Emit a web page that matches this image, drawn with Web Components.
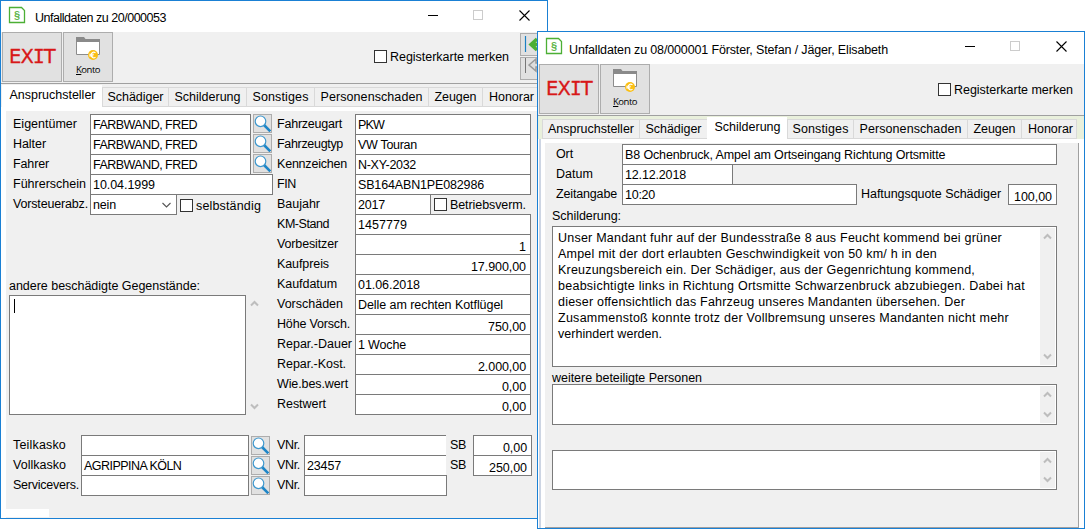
<!DOCTYPE html>
<html lang="de">
<head>
<meta charset="utf-8">
<title>Unfalldaten</title>
<style>
  body {
    margin: 0;
    width: 1085px;
    height: 529px;
    position: relative;
    overflow: hidden;
    background: #fff;
    color: #000;
    font: 12.5px/20px "Liberation Sans", Arial, sans-serif;
  }
  /* free floating windows on the desktop */
  #win-a { position: absolute; left: 0; top: 0; width: 548px; height: 519px; }
  #win-b {
    position: absolute; left: 537px; top: 31px; width: 548px; height: 498px;
    --title-h: 32px; --title-pad: 8px 0 0 6px; --check-top: 16px;
    --strip: #e9f0dc; --edge: #cdd5e3; --strip-pad: 4px;
    --panel-left: 4px; --panel-right: 5px; --panel-line: #a0a0a0;
  }
  .cols { display: flex; padding-top: 3px; }
  .left { width: 264px; padding-left: 7px; --label: 77px; }
  .right { --label: 78px; }
  .below { padding: 20px 0 0 7px; --label: 68px; }
  .other { margin: 62px 0 0 -4px; }
  .memo { display: flex; margin: -1px 0 0 -4px; }
  .patch { width: 43px; height: 8px; margin-top: 14px; background: #fff; }
  .b-rows { padding: 1px 0 0 11px; --label: 66px; }
  .b-text { padding-left: 7px; }
</style>
</head>
<body>

<app-window id="win-a" caption="Unfalldaten zu 20/000053" cw="131">
  <tool-bar slot="toolbar" check-gap="11" nav></tool-bar>
  <tab-strip slot="tabs" active="0" first="1" widths="100,66,78,68,114,54,60"></tab-strip>
  <div class="cols">
    <div class="left">
      <form-row label="Eigentümer" lw="64"><ui-input w="161" tw="104" value="FARBWAND, FRED"></ui-input><search-button></search-button></form-row>
      <form-row label="Halter" lw="33"><ui-input w="161" tw="104" value="FARBWAND, FRED"></ui-input><search-button></search-button></form-row>
      <form-row label="Fahrer" lw="36"><ui-input w="161" tw="104" value="FARBWAND, FRED"></ui-input><search-button></search-button></form-row>
      <form-row label="Führerschein" lw="73"><ui-input w="183" tw="62" value="10.04.1999"></ui-input></form-row>
      <form-row label="Vorsteuerabz." lw="75"><ui-input w="87" tw="23" value="nein" select></ui-input><ui-check style="margin: 2px 0 0 3px" label="selbständig" lw="65"></ui-check></form-row>
      <fit-text class="other" w="191">andere beschädigte Gegenstände:</fit-text>
      <div class="memo"><ui-area w="237" h="120" caret></ui-area><scroll-arrows style="height: 120px; margin-left: 1px"></scroll-arrows></div>
    </div>
    <div class="right">
      <form-row label="Fahrzeugart" lw="65"><ui-input w="176" tw="26" value="PKW"></ui-input></form-row>
      <form-row label="Fahrzeugtyp" lw="66"><ui-input w="176" tw="59" value="VW Touran"></ui-input></form-row>
      <form-row label="Kennzeichen" lw="70"><ui-input w="176" tw="58" value="N-XY-2032"></ui-input></form-row>
      <form-row label="FIN" lw="19"><ui-input w="176" tw="126" value="SB164ABN1PE082986"></ui-input></form-row>
      <form-row label="Baujahr" lw="43"><ui-input w="76" tw="27" value="2017"></ui-input><ui-check style="margin: 1px 0 0 3px" label="Betriebsverm." lw="76"></ui-check></form-row>
      <form-row label="KM-Stand" lw="52"><ui-input w="176" tw="49" value="1457779"></ui-input></form-row>
      <form-row label="Vorbesitzer" lw="61"><ui-input w="176" value="1" num></ui-input></form-row>
      <form-row label="Kaufpreis" lw="52"><ui-input w="176" tw="55" value="17.900,00" num></ui-input></form-row>
      <form-row label="Kaufdatum" lw="60"><ui-input w="176" tw="62" value="01.06.2018"></ui-input></form-row>
      <form-row label="Vorschäden" lw="66"><ui-input w="176" tw="145" value="Delle am rechten Kotflügel"></ui-input></form-row>
      <form-row label="Höhe Vorsch." lw="73"><ui-input w="176" tw="38" value="750,00" num></ui-input></form-row>
      <form-row label="Repar.-Dauer" lw="75"><ui-input w="176" tw="48" value="1 Woche"></ui-input></form-row>
      <form-row label="Repar.-Kost." lw="69"><ui-input w="176" tw="48" value="2.000,00" num></ui-input></form-row>
      <form-row label="Wie.bes.wert" lw="71"><ui-input w="176" tw="24" value="0,00" num></ui-input></form-row>
      <form-row label="Restwert" lw="49"><ui-input w="176" tw="24" value="0,00" num></ui-input></form-row>
    </div>
  </div>
  <div class="below">
    <form-row label="Teilkasko" lw="53"><ui-input w="168"></ui-input><search-button low></search-button>
      <form-row style="--label: 27px; margin-left: 7px" label="VNr." lw="23"><ui-input w="142" open></ui-input></form-row>
      <form-row style="--label: 23px; margin-left: 4px" label="SB" lw="16"><ui-input w="59" tw="24" value="0,00" num></ui-input></form-row></form-row>
    <form-row label="Vollkasko" lw="53"><ui-input w="168" tw="98" value="AGRIPPINA KÖLN"></ui-input><search-button low></search-button>
      <form-row style="--label: 27px; margin-left: 7px" label="VNr." lw="23"><ui-input w="142" tw="34" value="23457" open></ui-input></form-row>
      <form-row style="--label: 23px; margin-left: 4px" label="SB" lw="16"><ui-input w="59" tw="38" value="250,00" num></ui-input></form-row></form-row>
    <form-row label="Servicevers." lw="66"><ui-input w="168"></ui-input><search-button low></search-button>
      <form-row style="--label: 27px; margin-left: 7px" label="VNr." lw="23"><ui-input w="143"></ui-input></form-row></form-row>
  </div>
  <div class="patch"></div>
</app-window>

<app-window id="win-b" caption="Unfalldaten zu 08/000001 Förster, Stefan / Jäger, Elisabeth" cw="319">
  <tool-bar slot="toolbar" check-gap="11"></tool-bar>
  <tab-strip slot="tabs" active="2" first="0" widths="97,68,80,66,114,54,56"></tab-strip>
  <div class="b-rows">
    <form-row label="Ort" lw="17"><ui-input w="435" tw="321" value="B8 Ochenbruck, Ampel am Ortseingang Richtung Ortsmitte"></ui-input></form-row>
    <form-row label="Datum" lw="37"><ui-input w="111" tw="61" value="12.12.2018"></ui-input></form-row>
    <form-row label="Zeitangabe" lw="61"><ui-input w="235" tw="30" value="10:20"></ui-input>
      <form-row style="--label: 147px; margin-left: 4px" label="Haftungsquote Schädiger" lw="140"><ui-input w="49" tw="38" value="100,00" num></ui-input></form-row></form-row>
  </div>
  <div class="b-text">
    <fit-text w="69" style="margin-top: 2px">Schilderung:</fit-text>
    <ui-area w="505" h="141" bar>
      <fit-text w="444">Unser Mandant fuhr auf der Bundesstraße 8 aus Feucht kommend bei grüner</fit-text>
      <fit-text w="379">Ampel mit der dort erlaubten Geschwindigkeit von 50 km/ h in den</fit-text>
      <fit-text w="417">Kreuzungsbereich ein. Der Schädiger, aus der Gegenrichtung kommend,</fit-text>
      <fit-text w="467">beabsichtigte links in Richtung Ortsmitte Schwarzenbruck abzubiegen. Dabei hat</fit-text>
      <fit-text w="407">dieser offensichtlich das Fahrzeug unseres Mandanten übersehen. Der</fit-text>
      <fit-text w="451">Zusammenstoß konnte trotz der Vollbremsung unseres Mandanten nicht mehr</fit-text>
      <fit-text w="104">verhindert werden.</fit-text>
    </ui-area>
    <fit-text w="150" style="height: 17px; line-height: 22px">weitere beteiligte Personen</fit-text>
    <ui-area w="505" h="41" bar></ui-area>
    <ui-area w="505" h="40" bar style="margin-top: 25px"></ui-area>
  </div>
</app-window>

<script>
const ctx = document.createElement('canvas').getContext('2d');

// letter-spacing that brings a text to the wanted width
function spacing(text, width, font) {
  if (!width) return 0;
  ctx.font = font || '12.5px "Liberation Sans"';
  return (width - ctx.measureText(text).width) / text.length;
}

function fit(text, width) {
  return `<fit-text w="${width || ''}">${text}</fit-text>`;
}

function define(name, render) {
  customElements.define(name, class extends HTMLElement {
    constructor() {
      super();
      this.attachShadow({ mode: 'open' });
    }

    connectedCallback() {
      const template = document.createElement('template');
      template.innerHTML = render(this, (key) => this.getAttribute(key) || '');
      this.shadowRoot.replaceChildren(template.content.cloneNode(true));
    }
  });
}

define('fit-text', (el, attr) => `
  <style>
    :host { display: block; white-space: nowrap; letter-spacing: ${spacing(el.textContent, Number(attr('w')), attr('font'))}px; }
  </style>
  <slot></slot>
`);

define('app-window', (el, attr) => `
  <style>
    :host { display: flex; flex-direction: column; box-sizing: border-box; border: 1px solid #1a80d4; background: #fff; overflow: hidden; }
    header { display: flex; flex: none; height: var(--title-h, 31px); }
    header fit-text { padding: var(--title-pad, 7px 0 0 9px); flex: 1; }
    .doc { margin: 5px 0 0 7px; }
    .ctl { flex: none; margin: 8px 12px 0 0; }
    main { flex: 1; display: flex; min-height: 0; padding-right: var(--panel-right, 0); }
    .edge { width: 2px; margin-left: 1px; background: var(--edge, #fff); }
    .panel { flex: 1; margin: 4px 0 0 var(--panel-left, 2px); background: #f0f0f0; border: 0 solid var(--panel-line, #f0f0f0); border-width: 0 1px 1px 0; }
  </style>
  <header>
    <svg class="doc" width="18" height="18" viewBox="0 0 18 18">
      <path d="M1.5 1.5h12l3 3v12h-15z" fill="#fff" stroke="#4caf35" stroke-width="1.3"/>
      <text x="9" y="13" text-anchor="middle" font-size="11" font-weight="bold" fill="#5cb548">§</text>
    </svg>
    ${fit(attr('caption'), attr('cw'))}
    <svg class="ctl" width="110" height="14" viewBox="0 0 110 14">
      <path d="M3 6.5h10" stroke="#000"/>
      <rect x="48.5" y="1.5" width="9" height="9" fill="none" stroke="#ccc"/>
      <path d="M94.5 1.5l10 10M104.5 1.5l-10 10" stroke="#000" stroke-width="1.1"/>
    </svg>
  </header>
  <slot name="toolbar"></slot>
  <slot name="tabs"></slot>
  <main><div class="edge"></div><div class="panel"><slot></slot></div></main>
`);

define('tool-bar', (el, attr) => `
  <style>
    :host { display: flex; flex: none; box-sizing: border-box; height: 52px; padding-left: 1px; background: #f0f0f0; border-bottom: 1px solid #a0a0a0; }
    .btn { box-sizing: border-box; height: 50px; border: 1px solid #adadad; background: #e1e1e1; }
    .exit { width: 60px; margin-right: 1px; padding: 13px 0 0 6px; font: 19.5px/22px "DejaVu Sans", Verdana, sans-serif; letter-spacing: -.9px; color: #d81818; -webkit-text-stroke: .3px #d81818; }
    .exit span { font-family: "DejaVu Sans Mono", monospace; }
    .konto { width: 50px; font: 9.5px/14px "Open Sans", sans-serif; padding: 3px 0 0 12px; }
    .konto svg { display: block; }
    .konto fit-text { margin-top: 1px; }
    u { text-underline-offset: 1px; }
    ui-check { margin: var(--check-top, 15px) ${attr('check-gap')}px 0 auto; }
    .nav { width: 27px; display: flex; flex-direction: column; gap: 1px; padding-top: 1px; }
    .nav svg { display: block; border: 1px solid #adadad; background: #e1e1e1; }
  </style>
  <div class="btn exit">EX<span>I</span>T</div>
  <div class="btn konto">
    <svg width="26" height="26" viewBox="0 0 26 26">
      <path d="M.5 5v13.500h23V5" fill="#fff" stroke="#8c8c8c"/>
      <path d="M0 1h8l1.500 2H24v3H0z" fill="#8a8a8a"/>
      <circle cx="17" cy="19" r="5" fill="#fbbf12"/>
      <path d="M19.500 16.700c-2.300-1.500-4.300 0-4.300 2.300s2 3.800 4.300 2.300M13.300 18.300h4.500M13.300 19.900h4" fill="none" stroke="#fff" stroke-width="1.100"/>
    </svg>
    <fit-text w="24" font="9.5px 'Open Sans'"><u>K</u>onto</fit-text>
  </div>
  <ui-check label="Registerkarte merken" lw="119"></ui-check>
  ${el.hasAttribute('nav') ? `
  <div class="nav">
    <svg width="25" height="21" viewBox="0 0 25 21">
      <path d="M4.500 2v16" stroke="#1a80c4" stroke-width="1.200"/>
      <path d="M16 5l-6 5.500 6 5.500M10 10.500h12" fill="none" stroke="#4caf35" stroke-width="3.500"/>
    </svg>
    <svg width="25" height="21" viewBox="0 0 25 21">
      <path d="M4.500-1v16" stroke="#777"/>
      <path d="M8 7l7-6v4h6v4h-6v4z" fill="#ddd" stroke="#999" stroke-width="1.500"/>
    </svg>
  </div>` : ''}
`);

define('tab-strip', (el, attr) => {
  const names = ['Anspruchsteller', 'Schädiger', 'Schilderung', 'Sonstiges', 'Personenschaden', 'Zeugen', 'Honorar'];
  const textWidths = [86, 56, 66, 56, 102, 42, 45];
  const active = Number(attr('active'));
  const tabs = attr('widths').split(',').map((w, i) =>
    `<div class="tab ${i === active ? 'active' : ''}" style="width: ${w}px">${fit(names[i], textWidths[i])}</div>`).join('');
  return `
    <style>
      :host { display: flex; align-items: flex-end; flex: none; height: 23px; background: var(--strip, #f0f0f0); padding-left: var(--strip-pad, ${attr('first')}px); }
      .tab { display: flex; justify-content: center; box-sizing: border-box; flex: none; height: 20px; background: #f0f0f0; border: 1px solid #d9d9d9; border-right: 0; }
      .tab:last-child { justify-content: flex-start; border-right: 1px solid #d9d9d9; padding-left: 6px; }
      .tab fit-text { margin-top: -1px; }
      .active { height: 22px; background: #fff; border-color: #fff; }
    </style>
    ${tabs}
  `;
});

define('form-row', (el, attr) => `
  <style>
    :host { display: flex; height: 20px; }
    .label { flex: none; width: var(--label); }
    slot { display: flex; align-items: flex-start; }
  </style>
  <div class="label">${fit(attr('label'), attr('lw'))}</div>
  <slot></slot>
`);

define('ui-input', (el, attr) => `
  <style>
    :host { display: flex; flex: none; box-sizing: border-box; width: ${attr('w')}px; height: 21px; padding: 0 4px 0 2px; border: 1px solid #7a7a7a; background: #fff; }
    :host([num]) { justify-content: flex-end; padding-top: 2px; }
    :host([open]) { border-right: 0; }
    svg { margin: 7px 0 0 auto; }
  </style>
  ${fit(attr('value'), attr('tw'))}
  ${el.hasAttribute('select') ? '<svg width="11" height="7"><path d="M1.500 1l4 4 4-4" fill="none" stroke="#555" stroke-width="1.100"/></svg>' : ''}
`);

define('ui-check', (el, attr) => `
  <style>
    :host { display: flex; align-items: flex-start; }
    .box { box-sizing: border-box; width: 13px; height: 13px; margin: 3px 3px 0 0; border: 1px solid #333; background: #fff; }
  </style>
  <div class="box"></div>${fit(attr('label'), attr('lw'))}
`);

define('search-button', (el) => `
  <style>
    :host { display: block; flex: none; box-sizing: border-box; width: 19px; height: 19px; margin: ${el.hasAttribute('low') ? 1 : 0}px 0 0 2px; border: 1px solid #adadad; background: #e1e1e1; }
    svg { display: block; }
  </style>
  <svg width="17" height="17" viewBox="0 0 17 17">
    <path d="M10 10l6.300 6.300" stroke="#1f86c7" stroke-width="2.600"/>
    <circle cx="6.500" cy="6.300" r="5.300" fill="#fff" stroke="#3f98ce" stroke-width="1.200"/>
  </svg>
`);

define('scroll-arrows', () => `
  <style>
    :host { display: flex; flex-direction: column; justify-content: space-between; align-items: center; box-sizing: border-box; width: 15px; padding: 5px 0; background: #f0f0f0; }
    svg { display: block; }
  </style>
  <svg width="9" height="7"><path d="M1 5.500l3.500-3.500 3.500 3.500" fill="none" stroke="#bdbdbd" stroke-width="2"/></svg>
  <svg width="9" height="7"><path d="M1 1.500l3.500 3.500 3.500-3.500" fill="none" stroke="#bdbdbd" stroke-width="2"/></svg>
`);

define('ui-area', (el, attr) => `
  <style>
    :host { display: flex; box-sizing: border-box; width: ${attr('w')}px; height: ${attr('h')}px; border: 1px solid #7a7a7a; background: #fff; line-height: 16px; }
    .text { flex: 1; padding: 3px 0 0 5px; }
    .caret { width: 1px; height: 14px; margin-left: -1px; background: #000; }
    scroll-arrows { margin: 1px; }
  </style>
  <div class="text">${el.hasAttribute('caret') ? '<div class="caret"></div>' : '<slot></slot>'}</div>
  ${el.hasAttribute('bar') ? '<scroll-arrows></scroll-arrows>' : ''}
`);
</script>
</body>
</html>
